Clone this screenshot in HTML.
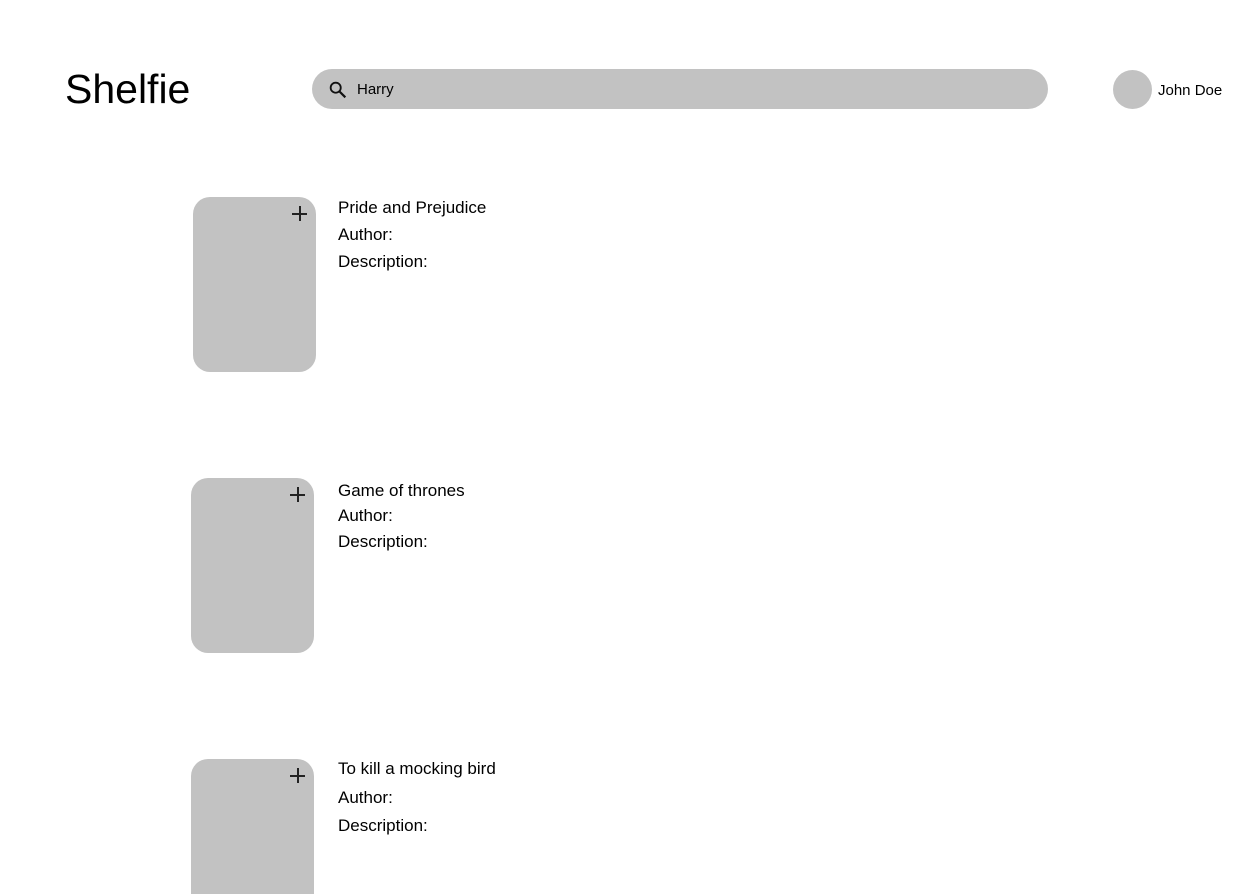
<!DOCTYPE html>
<html style="overflow:hidden"><head><style>
body{margin:0;width:1253px;height:894px;overflow:hidden;background:#fff;font-family:"Liberation Sans",sans-serif;color:#000;position:relative}
.a{position:absolute;white-space:nowrap}
.card{position:absolute;width:123px;height:175px;background:#c2c2c2;border-radius:17px}
.plus{position:absolute;right:9px;top:9px;width:15px;height:15px}
.plus:before,.plus:after{content:"";position:absolute;background:#222}
.plus:before{left:6.5px;top:0;width:2px;height:15px}
.plus:after{top:6.5px;left:0;height:2px;width:15px}
.t{font-size:17px}
</style></head><body>
<div class="a" style="left:65px;top:66px;font-size:41px">Shelfie</div>
<div class="a" style="left:312px;top:69px;width:736px;height:40px;background:#c2c2c2;border-radius:20px"></div>
<svg class="a" style="left:327px;top:79px" width="22" height="22" viewBox="0 0 24 24"><circle cx="9.5" cy="9.5" r="5.5" fill="none" stroke="#111" stroke-width="2"/><path d="M13.5 13.5L20 20" stroke="#111" stroke-width="2.4"/></svg>
<div class="a" style="left:357px;top:81px;font-size:15px">Harry</div>
<div class="a" style="left:1113px;top:70px;width:39px;height:39px;border-radius:50%;background:#c2c2c2"></div>
<div class="a" style="left:1158px;top:82px;font-size:15px">John Doe</div>

<div class="card" style="left:193px;top:197px"><div class="plus"></div></div>
<div class="a t" style="left:338px;top:198px">Pride and Prejudice</div>
<div class="a t" style="left:338px;top:225px">Author:</div>
<div class="a t" style="left:338px;top:252px">Description:</div>

<div class="card" style="left:191px;top:478px"><div class="plus"></div></div>
<div class="a t" style="left:338px;top:481px">Game of thrones</div>
<div class="a t" style="left:338px;top:506px">Author:</div>
<div class="a t" style="left:338px;top:532px">Description:</div>

<div class="card" style="left:191px;top:759px"><div class="plus"></div></div>
<div class="a t" style="left:338px;top:759px">To kill a mocking bird</div>
<div class="a t" style="left:338px;top:788px">Author:</div>
<div class="a t" style="left:338px;top:816px">Description:</div>
</body></html>
